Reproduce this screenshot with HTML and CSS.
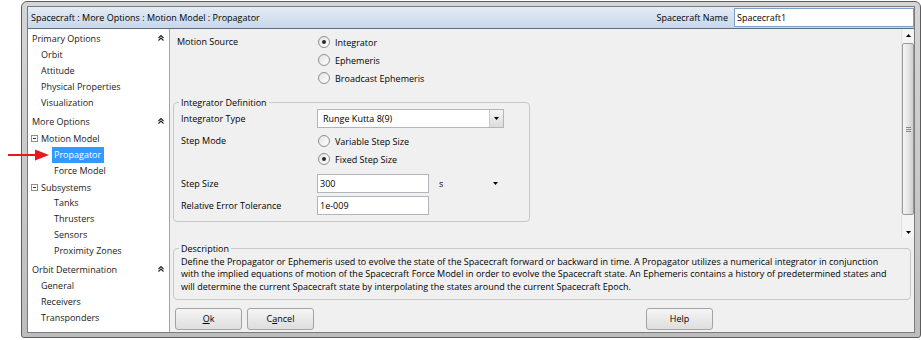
FILE: index.html
```html
<!DOCTYPE html>
<html lang="en">
<head>
    <meta charset="UTF-8">
    <meta name="viewport" content="width=device-width, initial-scale=1.0">
    <title>Spacecraft : Propagator</title>
    <link rel="stylesheet" href="styles.css">
</head>
<body>
    <div class="window">
        <div class="frame">
            <div class="header">
                <div class="path">Spacecraft : More Options : Motion Model : Propagator</div>
                <div class="name-label">Spacecraft Name</div>
                <div class="textbox name-box">Spacecraft1</div>
            </div>
            <div class="body">
                <div class="sidebar">
                    <div class="sec"><span>Primary Options</span><svg class="chev" width="6" height="6" viewBox="0 0 6 6"><path d="M0.5 3 L3 0.5 L5.5 3 M0.5 5.5 L3 3 L5.5 5.5"/></svg></div>
                    <div class="item">Orbit</div>
                    <div class="item">Attitude</div>
                    <div class="item">Physical Properties</div>
                    <div class="item">Visualization</div>
                    <div class="sec gap"><span>More Options</span><svg class="chev" width="6" height="6" viewBox="0 0 6 6"><path d="M0.5 3 L3 0.5 L5.5 3 M0.5 5.5 L3 3 L5.5 5.5"/></svg></div>
                    <div class="node tall"><svg class="toggle" width="7" height="7" viewBox="0 0 7 7"><rect x="0.5" y="0.5" width="6" height="6"/><path d="M2 3.5 H5"/></svg>Motion Model</div>
                    <div class="leaf"><span class="selected">Propagator</span></div>
                    <div class="leaf">Force Model</div>
                    <div class="node"><svg class="toggle" width="7" height="7" viewBox="0 0 7 7"><rect x="0.5" y="0.5" width="6" height="6"/><path d="M2 3.5 H5"/></svg>Subsystems</div>
                    <div class="leaf">Tanks</div>
                    <div class="leaf">Thrusters</div>
                    <div class="leaf">Sensors</div>
                    <div class="leaf">Proximity Zones</div>
                    <div class="sec gap"><span>Orbit Determination</span><svg class="chev" width="6" height="6" viewBox="0 0 6 6"><path d="M0.5 3 L3 0.5 L5.5 3 M0.5 5.5 L3 3 L5.5 5.5"/></svg></div>
                    <div class="item">General</div>
                    <div class="item">Receivers</div>
                    <div class="item">Transponders</div>
                </div>

                <div class="main">
                    <div class="scroll-area">
                        <div class="scroll-content">
                            <div class="motion">
                                <div class="label">Motion Source</div>
                                <div class="radios">
                                    <div class="radio on"><span class="dot"></span>Integrator</div>
                                    <div class="radio"><span class="dot"></span>Ephemeris</div>
                                    <div class="radio"><span class="dot"></span>Broadcast Ephemeris</div>
                                </div>
                            </div>

                            <fieldset class="group integrator">
                                <legend>Integrator Definition</legend>
                                <div class="g-row">
                                    <div class="label">Integrator Type</div>
                                    <div class="combo">
                                        <div class="combo-text">Runge Kutta 8(9)</div>
                                        <div class="combo-btn"><svg width="5" height="3" viewBox="0 0 5 3"><path d="M0 0 H5 L2.5 3 Z"/></svg></div>
                                    </div>
                                </div>
                                <div class="g-row step-mode">
                                    <div class="label">Step Mode</div>
                                    <div class="radios">
                                        <div class="radio"><span class="dot"></span>Variable Step Size</div>
                                        <div class="radio on"><span class="dot"></span>Fixed Step Size</div>
                                    </div>
                                </div>
                                <div class="g-row step-size">
                                    <div class="label">Step Size</div>
                                    <div class="inline">
                                        <div class="textbox field">300</div>
                                        <div class="unit">s</div>
                                        <svg class="unit-arrow" width="5" height="3" viewBox="0 0 5 3"><path d="M0 0 H5 L2.5 3 Z"/></svg>
                                    </div>
                                </div>
                                <div class="g-row tolerance">
                                    <div class="label">Relative Error Tolerance</div>
                                    <div class="textbox field">1e-009</div>
                                </div>
                            </fieldset>
                        </div>

                        <div class="scrollbar">
                            <div class="sb-btn"><svg width="5" height="3" viewBox="0 0 5 3"><path d="M0 3 H5 L2.5 0 Z"/></svg></div>
                            <div class="sb-thumb">
                                <span></span><span></span><span></span>
                            </div>
                            <div class="sb-space"></div>
                            <div class="sb-btn"><svg width="5" height="3" viewBox="0 0 5 3"><path d="M0 0 H5 L2.5 3 Z"/></svg></div>
                        </div>
                    </div>

                    <fieldset class="group description">
                        <legend>Description</legend>
                        <p>Define the Propagator or Ephemeris used to evolve the state of the Spacecraft forward or backward in time. A Propagator utilizes a numerical integrator in conjunction<br>
                        with the implied equations of motion of the Spacecraft Force Model in order to evolve the Spacecraft state. An Ephemeris contains a history of predetermined states and<br>
                        will determine the current Spacecraft state by interpolating the states around the current Spacecraft Epoch.</p>
                    </fieldset>

                    <div class="buttons">
                        <button type="button"><u>O</u>k</button>
                        <button type="button">C<u>a</u>ncel</button>
                        <button type="button" class="help">Help</button>
                    </div>
                </div>
            </div>
        </div>
    </div>

    <!-- annotation arrow drawn over the screenshot -->
    <svg class="pointer" width="46" height="14" viewBox="0 0 46 14">
        <path d="M2 7 H32" stroke="#e8161d" stroke-width="2"/>
        <polygon points="29,1.5 43,7 29,12.5" fill="#e8161d"/>
    </svg>
</body>
</html>
```

FILE: styles.css
```css
* {
    box-sizing: border-box;
}

body {
    margin: 0;
    background-color: #fff;
    font-family: "Open Sans", "Noto Sans", sans-serif;
    font-size: 9px;
    color: #000;
    position: relative;
}

/* outer window frame */
.window {
    margin: 1px 0 0 21px;
    width: 900px;
    height: 337px;
    padding: 4px 5px;
    border: 1px solid #5c5c5c;
    border-radius: 6px 6px 3px 3px;
    background: linear-gradient(#d6d6d6, #bdbdbd);
}
.frame {
    height: 100%;
    border: 1px solid #7b7b7b;
    background-color: #f0f0f0;
    display: flex;
    flex-direction: column;
}

.header {
    height: 22px;
    display: flex;
    align-items: center;
    padding-left: 3px;
    background: linear-gradient(#e4ecf6, #c7d7eb);
    border-bottom: 1px solid #5f6b78;
}
.path {
    flex: 1;
}
.name-label {
    margin-right: 6px;
}
.textbox {
    background-color: #fff;
    border: 1px solid #b2b5bb;
    height: 19px;
    line-height: 17px;
    padding-left: 2px;
}
.name-box {
    width: 180px;
    border-color: #7e9fc6;
}

.body {
    flex: 1;
    display: flex;
}

/* left tree */
.sidebar {
    width: 142px;
    background-color: #fff;
    border-right: 1px solid #a3a3a3;
    color: #1a1a1a;
}
.sec {
    height: 18px;
    display: flex;
    align-items: center;
    justify-content: space-between;
    padding: 0 5px 0 4px;
}
.sec.gap {
    height: 19px;
    padding-top: 1px;
}
.chev {
    fill: none;
    stroke: #222;
    stroke-width: 1.1;
}
.item {
    height: 16px;
    line-height: 16px;
    padding-left: 13px;
}
.node {
    height: 16px;
    display: flex;
    align-items: center;
    padding-left: 3px;
}
.node.tall {
    height: 17px;
}
.toggle {
    margin-right: 3px;
    fill: #fff;
    stroke: #8f8f8f;
    stroke-width: 1;
}
.toggle path {
    stroke: #333;
}
.leaf {
    height: 16px;
    line-height: 16px;
    padding-left: 26px;
}
.selected {
    display: inline-block;
    margin-left: -2px;
    padding: 0 3px 0 2px;
    background-color: #3399ff;
    color: #fff;
}

/* right side */
.main {
    flex: 1;
    display: flex;
    flex-direction: column;
}
.scroll-area {
    height: 209px;
    display: flex;
}
.scroll-content {
    flex: 1;
    padding: 4px 0 0 3px;
}
.motion {
    display: grid;
    grid-template-columns: 141px auto;
    padding-left: 4px;
}
.label {
    line-height: 18px;
}
.radio {
    height: 18px;
    display: flex;
    align-items: center;
}
.dot {
    width: 12px;
    height: 12px;
    margin-right: 5px;
    border: 1px solid #8c8e90;
    border-radius: 50%;
    background: linear-gradient(135deg, #e3e3e3, #fff);
    display: flex;
    align-items: center;
    justify-content: center;
}
.radio.on .dot::after {
    content: "";
    width: 4px;
    height: 4px;
    border-radius: 50%;
    background-color: #2a2a2a;
}

.group {
    margin: 0;
    border: 1px solid #c6c9cc;
    border-radius: 4px;
    min-width: 0;
}
.group legend {
    padding: 0 2px;
    margin-left: -2px;
    line-height: 13px;
}
.integrator {
    width: 357px;
    margin-top: 9px;
    padding: 0 0 6px 7px;
}
.g-row {
    display: grid;
    grid-template-columns: 136px auto;
    align-items: center;
    height: 19px;
}
.g-row.step-mode {
    height: 36px;
    margin-top: 4px;
    align-items: start;
}
.step-mode .radios {
    margin-left: 1px;
}
.g-row.step-size {
    margin-top: 6px;
}
.g-row.tolerance {
    margin-top: 3px;
}
.combo {
    width: 187px;
    height: 19px;
    display: flex;
    background-color: #fff;
    border: 1px solid #b2b5bb;
}
.combo-text {
    flex: 1;
    line-height: 17px;
    padding-left: 5px;
}
.combo-btn {
    width: 14px;
    border-left: 1px solid #c9c9c9;
    background: linear-gradient(#f4f4f4, #dcdcdc);
    display: flex;
    align-items: center;
    justify-content: center;
}
.inline {
    display: flex;
    align-items: center;
}
.field {
    width: 112px;
}
.unit {
    width: 54px;
    margin-left: 10px;
}

.scrollbar {
    width: 13px;
    display: flex;
    flex-direction: column;
    background-color: #f4f4f4;
    border-left: 1px solid #e2e2e2;
}
.sb-btn {
    height: 12px;
    display: flex;
    align-items: center;
    justify-content: center;
}
.sb-thumb {
    height: 172px;
    margin-top: 2px;
    border: 1px solid #989898;
    border-radius: 2px;
    background: linear-gradient(to right, #f6f6f6, #e4e4e4 55%, #cdcdcd);
    display: flex;
    flex-direction: column;
    align-items: center;
    justify-content: center;
    gap: 1px;
}
.sb-thumb span {
    width: 5px;
    height: 1px;
    background-color: #8a8a8a;
}
.sb-space {
    flex: 1;
}

.description {
    margin: 4px 3px 0;
    padding: 1px 6px 6px 7px;
}
.description p {
    margin: 0;
    line-height: 12.3px;
    white-space: nowrap;
}

.buttons {
    display: flex;
    gap: 5px;
    padding: 8px 0 0 5px;
}
.buttons button {
    width: 67px;
    height: 22px;
    font-family: inherit;
    font-size: 9px;
    color: #000;
    border: 1px solid #a3a3a3;
    border-radius: 3px;
    background: linear-gradient(#f6f6f6, #e9e9e9 50%, #dedede);
    padding: 0;
}
.buttons .help {
    margin-left: 327px;
}

/* red annotation arrow */
.pointer {
    position: absolute;
    left: 6px;
    top: 148px;
}
```
